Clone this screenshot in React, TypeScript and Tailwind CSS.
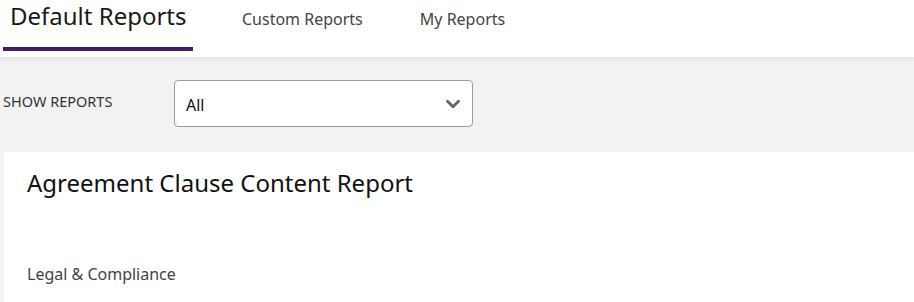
import { ChevronDown } from 'lucide-react'

const tabs = ['Default Reports', 'Custom Reports', 'My Reports']

export default function App() {
  return (
    <div className="min-h-[302px] w-[914px] overflow-hidden bg-[#f2f2f2] font-['Noto_Sans','Open_Sans',sans-serif] text-[#333]">
      {/* tabs */}
      <div className="relative z-10 flex h-[57px] items-start bg-white pl-[3px] shadow-[0_2px_6px_rgba(0,0,0,0.08)]">
        <div className="flex h-[51px] w-[190px] flex-col border-b-4 border-[#3f1f68]">
          <span className="pl-[7px] text-[24px] leading-[32px] text-[#1a1a1a]">{tabs[0]}</span>
        </div>
        <span className="ml-[49px] pt-[8px] text-[16px] leading-[22px] text-[#444]">{tabs[1]}</span>
        <span className="ml-[57px] pt-[8px] text-[16px] leading-[22px] text-[#444]">{tabs[2]}</span>
      </div>

      {/* filter */}
      <div className="flex h-[95px] items-start pt-[23px]">
        <span className="w-[174px] pl-[3px] pt-[12px] text-[14.5px] leading-[18px] text-[#333]">SHOW REPORTS</span>
        <div className="flex h-[47px] w-[299px] items-center justify-between rounded-[4px] border border-[#9a9a9a] bg-white pl-[11px] pr-[8px]">
          <span className="pt-[2px] text-[16px] text-[#111]">All</span>
          <ChevronDown size={22} strokeWidth={3.2} className="text-[#666]" />
        </div>
      </div>

      {/* card */}
      <div className="ml-[4px] h-[150px] bg-white pl-[23px] pt-[16px]">
        <h2 className="text-[24px] leading-[30px] text-[#111]">Agreement Clause Content Report</h2>
        <p className="mt-[65px] text-[16px] leading-[22px] text-[#444]">Legal &amp; Compliance</p>
      </div>
    </div>
  )
}
